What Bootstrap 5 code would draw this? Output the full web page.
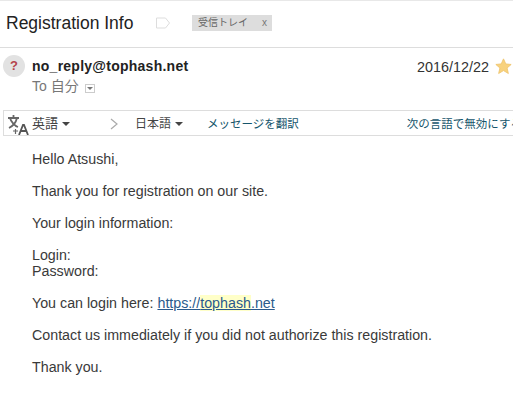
<!doctype html>
<html lang="ja"><head><meta charset="utf-8"><title>Registration Info</title>
<link rel="stylesheet" href="https://cdn.jsdelivr.net/npm/bootstrap@5.3.0/dist/css/bootstrap.min.css">
<style>
html,body{overflow:hidden;height:400px}
body{font-family:"Liberation Sans","Noto Sans CJK JP",sans-serif;color:#222;background:#fff;font-size:14px;line-height:16px}
.topline{height:1px;background:#e8e8e8}
.subj-row{height:46px;padding:0 0 0 6px;border-bottom:1px solid #ddd;box-sizing:content-box}
.subj{font-size:17.5px;line-height:22px;color:#222;width:150px;margin-top:-2px}
.inbox-tag{background:#ddd;color:#666;font-size:10px;line-height:16px;height:16px;width:80px;margin:-2px 0 0 22px;padding-left:6px}
.inbox-x{margin-left:14px;color:#777}
.label-ic{margin-top:-2px}
.sender-row{height:62px;padding:7px 0 0 3px}
.qmark{width:22px;height:22px;border-radius:50%;background:#e2e2e2;color:#b5444c;font-weight:700;font-size:13px;line-height:22px;text-align:center}
.sender-col{margin-left:7px;padding-top:3px}
.sender{font-weight:700;font-size:14px;line-height:16px;letter-spacing:.25px;color:#222}
.tome{color:#777;font-size:14px;line-height:16px;margin-top:4px}
.caret-box{width:10px;height:9px;border:1px solid #ccc;margin-left:6px;position:relative;top:-1px;display:inline-flex;align-items:center;justify-content:center}
.caret-box::after{content:"";border:3px solid transparent;border-top-color:#777;border-bottom:0}
.date-col{margin-left:auto;font-size:14.4px;color:#333;padding-top:3px}
.star-ic{width:17px;height:17px;margin:0 1px 0 6px;flex:none}
.trans-bar{height:23px;padding-top:1px;margin-left:3px;border-top:1px solid #ddd;border-bottom:1px solid #ddd;border-left:1px solid #ddd;white-space:nowrap;overflow:hidden;font-size:12px;color:#444;box-sizing:content-box}
.trans-bar>*{flex:none}
.tr-ic{width:22px;height:24px;margin-left:3px}
.tri{display:inline-block;border:4px solid transparent;border-top-color:#444;border-bottom:0;margin-left:4px;vertical-align:2px}
.tl1{margin-left:3px;width:77px;font-size:13px}
.tchev{width:20px;height:14px;margin-right:10px;margin-left:-4px}
.tl2{width:72px}
.tlink{color:#15556b;font-size:11.5px}
.tlink2{margin-left:108px}
.mail-body{padding:15px 0 0 32px;color:#3a3a3a;font-size:14.25px;line-height:16px}
.mail-body p{margin:0 0 16px}
.url{color:#2a5a8c;text-decoration:underline}
.hl{background:#ffffc8}
</style></head><body>
<div class="topline"></div>
<div class="subj-row d-flex align-items-center">
<div class="subj">Registration Info</div>
<svg class="label-ic" width="14" height="12" viewBox="0 0 14 12" aria-hidden="true"><path d="M.5 1h9l4 5-4 5h-9z" fill="#fff" stroke="#ddd"/></svg>
<div class="inbox-tag">受信トレイ<span class="inbox-x">x</span></div>
</div>
<div class="sender-row d-flex align-items-start">
<div class="qmark">?</div>
<div class="sender-col"><div class="sender">no_reply@tophash.net</div><div class="tome">To 自分<span class="caret-box"></span></div></div>
<div class="date-col d-flex align-items-center">2016/12/22<svg class="star-ic" viewBox="0 0 20 20" aria-hidden="true"><path d="M10 1l2.7 6 6.3.6-4.8 4.2 1.5 6.4L10 14.8l-5.7 3.4 1.5-6.4L1 7.600l6.300-.6z" fill="#f8d27d" stroke="#eec46d"/></svg></div>
</div>
<div class="trans-bar d-flex align-items-center">
<svg class="tr-ic" viewBox="0 0 22 24" aria-hidden="true"><path d="M1 6h11M6.500 3v3M3 6c1 4 5 8 8 9M10 6c-1 4-4 8-8 10" fill="none" stroke="#666" stroke-width="1.800"/><path d="M6 19h5M8.500 17v5" stroke="#666" stroke-width="1.200"/><path d="M12 23l4-10h1l4 10M14 19h5" fill="none" stroke="#555" stroke-width="1.800"/></svg>
<span class="tl1">英語<i class="tri"></i></span>
<svg class="tchev" viewBox="0 0 20 14" aria-hidden="true"><path d="M6 2l6 5-6 5" fill="none" stroke="#aaa" stroke-width="1.200"/></svg>
<span class="tl2">日本語<i class="tri"></i></span>
<span class="tlink">メッセージを翻訳</span>
<span class="tlink tlink2">次の言語で無効にする</span>
</div>
<div class="mail-body">
<p>Hello Atsushi,</p>
<p>Thank you for registration on our site.</p>
<p>Your login information:</p>
<p>Login:<br>Password:</p>
<p>You can login here: <span class="url">https://<span class="hl">tophash</span>.net</span></p>
<p>Contact us immediately if you did not authorize this registration.</p>
<p>Thank you.</p>
</div>
<script src="https://cdn.jsdelivr.net/npm/bootstrap@5.3.0/dist/js/bootstrap.bundle.min.js"></script>
</body></html>
